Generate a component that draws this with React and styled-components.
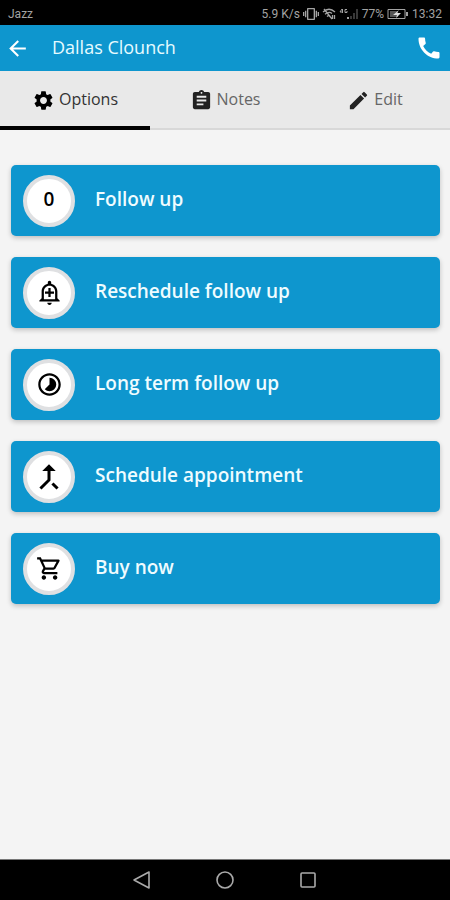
import React, { useState } from "react";
import styled, { createGlobalStyle } from "styled-components";
import {
  MdArrowBack,
  MdAssignment,
  MdCall,
  MdCallMerge,
  MdEdit,
  MdOutlineAddAlert,
  MdOutlineShoppingCart,
  MdSettings,
  MdTimelapse,
  MdVibration,
} from "react-icons/md";

const GlobalStyle = createGlobalStyle`
  * {
    box-sizing: border-box;
  }
  body {
    margin: 0;
    background: #f4f4f4;
    font-family: "Open Sans", "Noto Sans", sans-serif;
  }
  button {
    margin: 0;
    padding: 0;
    border: 0;
    background: none;
    color: inherit;
    font: inherit;
    cursor: pointer;
  }
`;

const Screen = styled.div`
  display: flex;
  flex-direction: column;
  min-height: 100vh;
`;

const StatusBar = styled.div`
  display: flex;
  align-items: center;
  justify-content: space-between;
  height: 25px;
  padding: 2px 8px 0;
  background: #000;
  color: #a3a3a3;
  font-family: Roboto, sans-serif;
  font-size: 12px;
  line-height: 16px;
`;

const StatusGroup = styled.div`
  display: flex;
  align-items: center;
  gap: 3px;
`;

const AppBar = styled.header`
  display: flex;
  align-items: center;
  height: 46px;
  padding: 0 7px 0 5px;
  background: #0e96ce;
  color: #fff;
`;

const IconButton = styled.button`
  display: flex;
  font-size: ${(props) => props.$size}px;
`;

const Title = styled.h1`
  flex: 1;
  margin: 0;
  padding: 0 0 2px 22px;
  color: #e6fbff;
  font-size: 18px;
  font-weight: 400;
  line-height: 24px;
`;

const Tabs = styled.nav`
  display: grid;
  grid-template-columns: repeat(3, 1fr);
  height: 59px;
  background: #e9e9e9;
`;

const Tab = styled.button`
  && {
    display: flex;
    align-items: center;
    justify-content: center;
    gap: 4px;
    padding-top: ${(props) => (props.$active ? 4 : 2)}px;
    border-bottom: ${(props) => (props.$active ? "4px solid #000" : "2px solid #d8d8d8")};
    color: ${(props) => (props.$active ? "#333" : "#666")};
    font-size: 16px;
    line-height: 20px;
  }
  svg {
    color: ${(props) => (props.$active ? "#000" : "#222")};
    font-size: 23px;
  }
`;

const TabLabel = styled.span`
  padding-bottom: 4px;
`;

const Options = styled.main`
  display: flex;
  flex: 1;
  flex-direction: column;
  gap: 21px;
  padding: 35px 10px 35px 11px;
`;

const OptionCard = styled.button`
  && {
    display: flex;
    align-items: center;
    gap: 20px;
    height: 71px;
    padding: 0 12px;
    border-radius: 5px;
    background: #0e96ce;
    box-shadow: 0 2px 5px rgba(0, 0, 0, 0.22);
    color: #effcff;
    font-size: 19px;
    font-weight: 600;
    line-height: 24px;
    text-align: left;
  }
`;

const Badge = styled.span`
  display: flex;
  align-items: center;
  justify-content: center;
  flex: none;
  width: 52px;
  height: 52px;
  border: 4px solid #dfe0e2;
  border-radius: 50%;
  background: #fff;
  color: #000;
  svg {
    font-size: ${(props) => (props.$large ? 36 : 27)}px;
  }
`;

const OptionLabel = styled.span`
  padding-bottom: 4px;
`;

const NavBar = styled.footer`
  display: flex;
  align-items: center;
  justify-content: center;
  gap: 63px;
  height: 41px;
  border-top: 1px solid #777;
  background: #000;
`;

const NavIcon = styled.svg`
  display: block;
  width: 20px;
  height: 20px;
  fill: none;
  stroke: #aaa;
  stroke-width: 1.6;
  stroke-linejoin: round;
`;

const tabs = [
  { name: "Options", icon: <MdSettings /> },
  { name: "Notes", icon: <MdAssignment /> },
  { name: "Edit", icon: <MdEdit /> },
];

const options = [
  { name: "Follow up", icon: <OptionLabel>0</OptionLabel> },
  { name: "Reschedule follow up", icon: <MdOutlineAddAlert /> },
  { name: "Long term follow up", icon: <MdTimelapse /> },
  { name: "Schedule appointment", icon: <MdCallMerge />, large: true },
  { name: "Buy now", icon: <MdOutlineShoppingCart /> },
];

// wifi with data arrows
function WifiIcon() {
  return (
    <svg width="14" height="12" viewBox="0 0 14 12" fill="none" stroke="currentColor" strokeWidth="1.3">
      <path d="M1 4Q7-1.5 13 4M3 6.3Q7 2.8 10 5.5M5 8.5Q6.5 7 8 8" />
      <path d="M2 1l8 10M10.500 7v4M12.500 11V7" />
    </svg>
  );
}

function SignalIcon() {
  return (
    <svg width="20" height="12" viewBox="0 0 20 12">
      <path d="M3 1L1 4h3M3.500 1v4M8 1.500H6v3h2V3" fill="none" stroke="currentColor" />
      <path d="M8 9h2v2H8z" fill="currentColor" />
      <path d="M11 8h2v3h-2zM14 5h2v6h-2zM17 1h2v10h-2z" fill="#383838" />
    </svg>
  );
}

function BatteryIcon() {
  return (
    <svg width="22" height="12" viewBox="0 0 22 12">
      <path d="M1 1.500h17v9H1z" fill="none" stroke="currentColor" />
      <path d="M3 3h8v6H3z" fill="#555" />
      <path d="M12 2L6 7h4l-1 3 5-5h-4z" fill="#ddd" />
      <path d="M19 4h2v4h-2z" fill="currentColor" />
    </svg>
  );
}

function App() {
  const [activeTab, setActiveTab] = useState("Options");

  return (
    <Screen>
      <GlobalStyle />
      <StatusBar>
        <span>Jazz</span>
        <StatusGroup>
          <span>5.9 K/s</span>
          <MdVibration size={16} />
          <WifiIcon />
          <SignalIcon />
          <span>77%</span>
          <BatteryIcon />
          <span>13:32</span>
        </StatusGroup>
      </StatusBar>

      <AppBar>
        <IconButton $size={25} aria-label="Back">
          <MdArrowBack />
        </IconButton>
        <Title>Dallas Clounch</Title>
        <IconButton $size={28} aria-label="Call">
          <MdCall />
        </IconButton>
      </AppBar>

      <Tabs>
        {tabs.map((tab) => (
          <Tab
            key={tab.name}
            $active={tab.name === activeTab}
            onClick={() => setActiveTab(tab.name)}
          >
            {tab.icon}
            <TabLabel>{tab.name}</TabLabel>
          </Tab>
        ))}
      </Tabs>

      <Options>
        {options.map((option) => (
          <OptionCard key={option.name}>
            <Badge $large={option.large}>{option.icon}</Badge>
            <OptionLabel>{option.name}</OptionLabel>
          </OptionCard>
        ))}
      </Options>

      <NavBar>
        <IconButton $size={20} aria-label="System back">
          <NavIcon viewBox="0 0 20 20">
            <path d="M17 2v16L2 10z" />
          </NavIcon>
        </IconButton>
        <IconButton $size={20} aria-label="Home">
          <NavIcon viewBox="0 0 20 20">
            <circle cx="10" cy="10" r="8" />
          </NavIcon>
        </IconButton>
        <IconButton $size={20} aria-label="Recent apps">
          <NavIcon viewBox="0 0 20 20">
            <rect x="3" y="3" width="14" height="14" rx="1" />
          </NavIcon>
        </IconButton>
      </NavBar>
    </Screen>
  );
}

export default App;
